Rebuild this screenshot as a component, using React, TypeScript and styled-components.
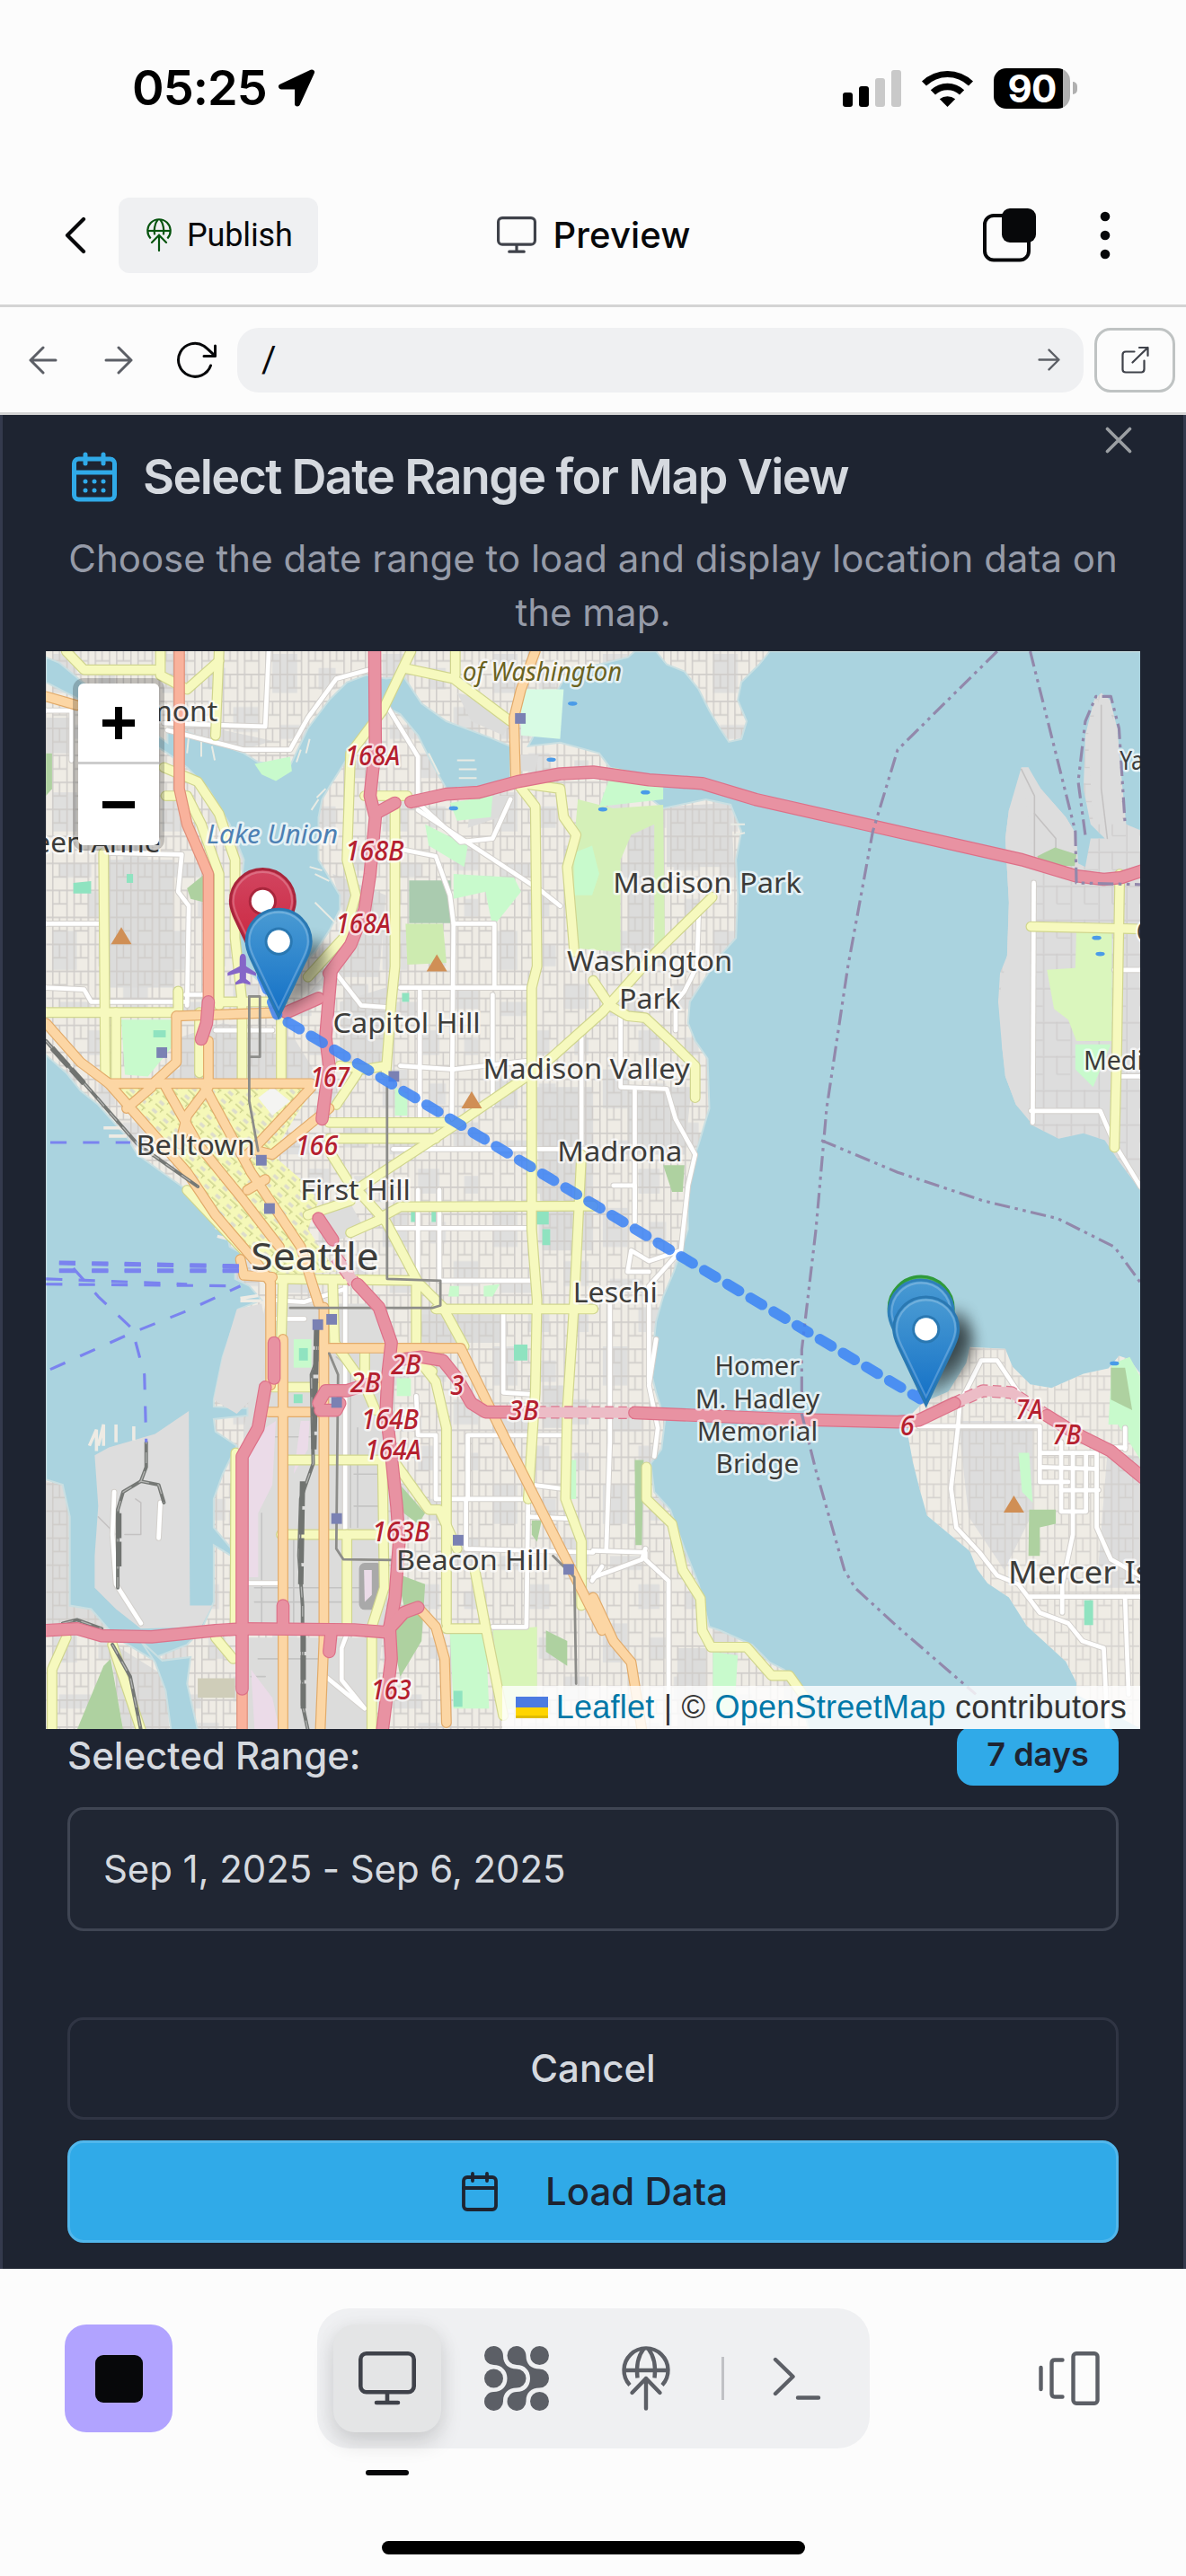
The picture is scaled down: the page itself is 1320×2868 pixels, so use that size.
import React from "react";
import styled, { createGlobalStyle } from "styled-components";

const GlobalStyle = createGlobalStyle`
  * { box-sizing: border-box; }
  html, body { margin: 0; padding: 0; background: #fcfcfc; }
  body { font-family: Inter, "Liberation Sans", sans-serif; }
  button { font: inherit; padding: 0; margin: 0; border: 0; background: none; color: inherit; }
`;

const INK = "#07080a";
const MUTED = "#5c5f66";

/* ------------------------------ shell ------------------------------ */

const Screen = styled.div`
  width: 1320px;
  height: 2868px;
  display: flex;
  flex-direction: column;
  background: #fcfcfc;
  overflow: hidden;
`;

const StatusBar = styled.header`
  height: 184px;
  flex: none;
  display: flex;
  justify-content: space-between;
  align-items: flex-start;
  padding: 75px 121px 0 147px;
`;

const Clock = styled.div`
  display: flex;
  align-items: center;
  gap: 12px;
  height: 46px;
  font-size: 54px;
  font-weight: 600;
  line-height: 46px;
  letter-spacing: -0.9px;
  color: #000;
`;

const StatusIcons = styled.div`
  display: flex;
  align-items: center;
  height: 46px;
`;

const Signal = styled.div`
  display: flex;
  align-items: flex-end;
  gap: 7px;
  height: 41px;
  margin-right: 23px;
`;

const SignalBar = styled.i<{ $h: number; $on: boolean }>`
  width: 11px;
  height: ${(p) => p.$h}px;
  border-radius: 3px;
  background: ${(p) => (p.$on ? "#000" : "#c9c9c9")};
`;

const Battery = styled.div`
  width: 85px;
  height: 45px;
  margin: 0 3px 0 23px;
  border-radius: 14px;
  background: linear-gradient(90deg, #000 77px, #b0b0b0 77px);
  color: #fff;
  font-size: 42px;
  font-weight: 700;
  line-height: 45px;
  text-align: center;
  letter-spacing: -0.8px;
`;

const BatteryTip = styled.i`
  width: 5px;
  height: 14px;
  border-radius: 0 5px 5px 0;
  background: #b0b0b0;
`;

const NavBar = styled.nav`
  height: 158px;
  flex: none;
  display: grid;
  grid-template-columns: 1fr auto 1fr;
  align-items: center;
  padding: 0 84px 0 72px;
  border-bottom: 3px solid #d4d4d4;
`;

const NavSide = styled.div<{ $end?: boolean }>`
  display: flex;
  align-items: center;
  justify-content: ${(p) => (p.$end ? "flex-end" : "flex-start")};
  gap: ${(p) => (p.$end ? "70px" : "36px")};
`;

const PublishButton = styled.button`
  width: 222px;
  height: 84px;
  display: flex;
  align-items: center;
  gap: 17px;
  padding-left: 31px;
  border-radius: 12px;
  background: #eff0f2;
  font-family: Roboto, Inter, sans-serif;
  font-size: 36px;
  line-height: 44px;
  letter-spacing: -0.15px;
  color: ${INK};
`;

const NavTitle = styled.h1`
  display: flex;
  align-items: center;
  gap: 18px;
  margin: 0 0 0 14px;
  font-size: 40px;
  line-height: 48px;
  font-weight: 500;
  letter-spacing: 0.15px;
  color: ${INK};
`;

const AddressBar = styled.div`
  height: 120px;
  flex: none;
  display: flex;
  align-items: center;
  padding: 0 12px 0 32px;
  border-bottom: 3px solid #d4d4d4;
`;

const HistoryIcons = styled.div`
  display: flex;
  align-items: center;
  width: 232px;
  gap: 52px;
  flex: none;
  > :last-child { margin-left: -4px; }
`;

const UrlField = styled.div`
  flex: 1;
  height: 72px;
  display: flex;
  align-items: center;
  justify-content: space-between;
  padding: 0 26px 0 27px;
  border-radius: 24px;
  background: #eff0f2;
  font-family: Roboto, sans-serif;
  font-size: 40px;
  line-height: 48px;
  color: ${INK};
`;

const OpenButton = styled.button`
  width: 90px;
  height: 72px;
  flex: none;
  margin-left: 12px;
  display: grid;
  place-items: center;
  border: 3px solid #bfc3c3;
  border-radius: 18px;
`;

/* ------------------------------ dialog ------------------------------ */

const Dialog = styled.main`
  height: 2064px;
  flex: none;
  display: flex;
  flex-direction: column;
  background: #1e2431;
  border: solid #343a4d;
  border-width: 0 3px;
  color: #d5d9df;
`;

const CloseRow = styled.div`
  height: 43px;
  display: flex;
  justify-content: flex-end;
  align-items: flex-end;
  padding-right: 57px;
`;

const Heading = styled.h2`
  display: flex;
  align-items: center;
  gap: 24px;
  height: 60px;
  margin: -4px 0 0 72px;
  font-size: 54px;
  line-height: 54px;
  font-weight: 600;
  letter-spacing: -1.68px;
`;

const Description = styled.p`
  margin: 31px 60px 0;
  height: 133px;
  font-size: 42px;
  line-height: 60px;
  text-align: center;
  color: #969ba8;
`;

const MapFrame = styled.section`
  position: relative;
  z-index: 1;
  width: 1218px;
  height: 1200px;
  margin-left: 48px;
  flex: none;
  overflow: hidden;
  background: #aad3df;
  > svg { display: block; }
`;

const ZoomControl = styled.div`
  position: absolute;
  left: 30px;
  top: 30px;
  width: 102px;
  display: flex;
  flex-direction: column;
  border: 6px solid rgba(0, 0, 0, 0.2);
  border-radius: 12px;
  background-clip: padding-box;
`;

const ZoomButton = styled.button<{ $first?: boolean }>`
  height: 90px;
  display: grid;
  place-items: center;
  background: #fff;
  border-bottom: ${(p) => (p.$first ? "3px solid #ccc" : "0")};
  border-radius: ${(p) => (p.$first ? "6px 6px 0 0" : "0 0 6px 6px")};
`;

const Attribution = styled.div`
  position: absolute;
  right: 0;
  bottom: 0;
  height: 48px;
  display: flex;
  align-items: center;
  padding: 0 15px;
  background: rgba(255, 255, 255, 0.8);
  font-family: "Liberation Sans", Arial, sans-serif;
  font-size: 36px;
  line-height: 48px;
  letter-spacing: 0.24px;
  white-space: pre;
  color: #333;
`;

const MapLink = styled.span`
  color: #0078a8;
`;

const Flag = styled.i`
  width: 36px;
  height: 24px;
  margin-right: 9px;
  background: linear-gradient(#4c7be1 50%, #ffd500 50%, #ffd500 86%, #e0bc00 86%);
`;

const RangeRow = styled.div`
  display: flex;
  align-items: center;
  justify-content: space-between;
  height: 66px;
  margin: -3px 72px 0;
  font-size: 42px;
  line-height: 60px;
  font-weight: 500;
  flex: none;
`;

const DaysBadge = styled.span`
  width: 180px;
  height: 66px;
  border-radius: 18px;
  background: #30aae8;
  color: #1e2431;
  font-size: 36px;
  font-weight: 600;
  line-height: 62px;
  text-align: center;
`;

const RangeField = styled.div`
  height: 138px;
  flex: none;
  margin: 24px 72px 0;
  padding: 0 37px;
  border: 3px solid #3f4553;
  border-radius: 18px;
  background: #202633;
  font-size: 42px;
  line-height: 131px;
  letter-spacing: -0.1px;
`;

const Actions = styled.div`
  display: flex;
  flex-direction: column;
  gap: 23px;
  margin: 96px 72px 0;
`;

const ActionButton = styled.button<{ $primary?: boolean }>`
  height: 114px;
  display: flex;
  align-items: center;
  justify-content: center;
  gap: 49px;
  border: 3px solid ${(p) => (p.$primary ? "#51b7ec" : "#303544")};
  border-radius: 18px;
  background: ${(p) => (p.$primary ? "#30aae8" : "transparent")};
  color: ${(p) => (p.$primary ? "#1e2431" : "#d5d9df")};
  font-size: 42px;
  line-height: 60px;
  font-weight: 500;
`;

/* ------------------------------ bottom bar ------------------------------ */

const BottomBar = styled.footer`
  height: 342px;
  flex: none;
  display: grid;
  grid-template-columns: 281px 615px 1fr;
  align-items: start;
  padding: 44px 96px 0 72px;
`;

const StopButton = styled.button`
  width: 120px;
  height: 120px;
  margin-top: 18px;
  display: grid;
  place-items: center;
  border-radius: 24px;
  background: #b1a3ff;
`;

const StopGlyph = styled.i`
  width: 53px;
  height: 53px;
  border-radius: 9px;
  background: ${INK};
`;

const ToolGroup = styled.div`
  height: 156px;
  display: flex;
  align-items: center;
  padding-left: 18px;
  border-radius: 36px;
  background: #eff0f2;
`;

const Tool = styled.button<{ $active?: boolean; $w: number }>`
  width: ${(p) => p.$w}px;
  flex: none;
  height: 120px;
  display: grid;
  place-items: center;
  border-radius: 24px;
  background: ${(p) => (p.$active ? "#e4e5e6" : "transparent")};
  box-shadow: ${(p) => (p.$active ? "0 12px 24px rgba(0,0,0,.14), 0 0 24px rgba(0,0,0,.04)" : "none")};
`;

const ToolDivider = styled.i`
  width: 3px;
  height: 48px;
  margin-left: 24px;
  flex: none;
  background: #c0c1c5;
`;

const Side = styled.div`
  height: 156px;
  display: flex;
  align-items: center;
  justify-content: flex-end;
`;

const ActiveMark = styled.i`
  display: block;
  width: 48px;
  height: 6px;
  border-radius: 3px;
  margin: 24px 0 0 54px;
  background: ${INK};
`;

const HomeIndicator = styled.i`
  display: block;
  width: 471px;
  height: 15px;
  border-radius: 8px;
  margin: 73px 0 0 72px;
  background: #000;
`;

/* ------------------------------ icons ------------------------------ */

const PublishIcon = ({ w, color, sw }: { w: number; color: string; sw: number }) => (
  <svg width={w} height={(w * 72) / 54} viewBox="0 0 54 72" fill="none" stroke={color} strokeWidth={sw} strokeLinecap="round" strokeLinejoin="round">
    <path d="M9 43.500A24.500 24.500 0 1 1 45 43.500" strokeLinecap="butt" />
    <path d="M2.500 27H51.500" strokeLinecap="butt" />
    <path d="M17.500 35.500Q15 15 24.500 3M36.500 35.500Q39 15 29.500 3" strokeLinecap="butt" />
    <path d="M27 69.500V36M11.500 52L27 36 42.500 52" />
  </svg>
);

const MonitorIcon = ({ w, color, sw }: { w: number; color: string; sw: number }) => (
  <svg width={w} height={(w * 60) / 64} viewBox="0 0 64 60" fill="none" stroke={color} strokeWidth={sw} strokeLinecap="round">
    <rect x="2.300" y="2.300" width="59.400" height="43" rx="6.500" />
    <path d="M32 46V56M20 57H44" />
  </svg>
);

const Arrow = ({ w, color, sw, left }: { w: number; color: string; sw: number; left?: boolean }) => (
  <svg width={w} height={w} viewBox="0 0 32 32" fill="none" stroke={color} strokeWidth={sw} strokeLinecap="round" strokeLinejoin="round">
    <path d={left ? "M30 16H2M16 2L2 16 16 30" : "M2 16H30M16 2L30 16 16 30"} />
  </svg>
);

const DotsGridIcon = () => (
  <svg width="72" height="72" viewBox="0 0 72 72" fill={MUTED}>
    <circle cx="61.500" cy="10.500" r="10.500" />
    <circle cx="10.500" cy="36" r="10.500" />
    <circle cx="61.500" cy="61.500" r="10.500" />
    <path d="M10.500 0C17 0 21 5 21 11 21 20 27 25.500 36 25.500A10.500 10.500 0 0 1 36 46.500C27 46.500 21 52 21 61A10.500 10.500 0 1 1 10.500 51C19 51 25.500 45 25.500 36S19 21 10.500 21A10.500 10.500 0 1 1 10.500 0Z" />
    <path d="M36 0C42 0 46.500 5 46.500 11 46.500 20 52 25.500 61.500 25.500A10.500 10.500 0 0 1 61.500 46.500C52 46.500 46.500 52 46.500 61A10.500 10.500 0 1 1 36 51C45 51 51 45 51 36S45 21 36 21A10.500 10.500 0 1 1 36 0Z" />
  </svg>
);

const CalendarIcon = ({ size, color, days }: { size: number; color: string; days?: boolean }) => (
  <svg width={size} height={size} viewBox="0 0 24 24" fill="none" stroke={color} strokeWidth={days ? 2 : 1.9} strokeLinecap="round" strokeLinejoin="round">
    <rect x="3" y="4" width="18" height="18" rx="2" />
    <path d="M8 2v4M16 2v4M3 10h18" />
    {days && <path d="M8 14h.01M12 14h.01M16 14h.01M8 18h.01M12 18h.01M16 18h.01" />}
  </svg>
);

/* ------------------------------ map data ------------------------------ */

const WATER = [
  "3,30 40,45 100,95 200,170 345,270 345,240 400,240 480,270 560,300 600,325 690,335 740,230 800,150 850,100 905,80 960,90 1010,85 1060,160 1130,210 1250,255 1310,280 1310,375 1200,405 1130,400 1090,330 1050,250 1000,190 960,170 900,250 860,300 800,395 780,430 770,480 770,600 800,650 830,700 830,740 800,800 760,860 720,900 620,960 560,900 545,850 550,700 560,600 520,500 460,400 400,340 345,300 200,210 100,150 3,100",
  "1450,110 1480,60 1560,50 1640,30 1660,13 1720,13 1750,50 1800,70 1840,120 1870,180 1900,230 1925,268 1960,260 1975,210 1950,150 1960,100 2010,50 2040,13 3090,13 3090,3050 2150,3050 2120,2925 2080,2880 2040,2860 1990,2810 1900,2770 1870,2760 1840,2640 1800,2540 1760,2430 1715,2380 1705,2300 1735,2260 1745,2180 1720,2100 1705,2040 1720,1900 1740,1830 1770,1760 1810,1640 1808,1520 1820,1460 1840,1400 1870,1300 1865,1160 1830,1110 1810,1060 1815,1000 1860,930 1900,870 1945,820 1950,700 1945,600 1960,520 1930,445 1860,430 1740,455 1680,410 1640,360 1590,340 1560,300 1450,270 1360,280",
  "3,1150 60,1200 100,1250 150,1290 230,1380 260,1430 330,1480 400,1530 440,1570 500,1590 520,1690 575,1720 535,1740 535,1780 575,1800 610,1840 545,1865 500,2000 475,2120 475,2140 570,2145 570,2165 475,2175 480,2210 540,2250 500,2330 475,2400 475,2480 525,2540 525,2560 475,2530 475,2690 440,2770 400,2810 300,2850 200,2790 130,2710 70,2700 70,2450 50,2360 3,2345",
  "270,2800 330,2855 410,2845 400,2920 430,3050 355,3050 340,2940 310,2860",
];

const LAND_GRAY = [
  "140,2277 180,2255 310,2217 405,2152 408,2700 470,2700 440,2760 270,2765 200,2710 140,2650 140,2560 150,2420",
  "540,1865 610,1850 630,1960 600,2100 540,2160 475,2120 500,2000",
  "2748,340 2768,340 2803,400 2873,480 2903,530 2908,610 2928,620 2943,540 2983,540 2943,500 2923,400 2928,250 2953,150 2973,130 2998,150 3018,230 3033,400 3043,500 3090,520 3090,1540 3023,1450 2983,1390 2923,1370 2853,1385 2783,1350 2733,1290 2703,1210 2693,1120 2698,1050 2683,1000 2688,920 2708,870 2713,720 2703,540 2713,460 2743,400",
];

const MERCER =
  "2603,1972 2703,1977 2723,2027 2773,2077 2833,2087 2923,2047 2993,2032 3023,1997 3053,2007 3090,2057 3090,3050 2903,2950 2903,2917 2873,2857 2763,2757 2713,2677 2653,2637 2623,2597 2603,2547 2543,2497 2483,2447 2463,2377 2443,2297 2428,2217 2443,2157 2473,2127 2543,2097 2593,2017";

const GRAY_CITY = [
  "345,200 640,265 560,290 345,245",
  "3,200 80,200 80,300 3,300",
  "810,640 960,700 940,930 830,930 720,1000 860,840",
  "380,1100 500,1060 700,1100 780,1230 380,1230",
  "830,1000 960,960 960,1200 830,1180",
  "1380,1240 1543,1240 1543,1700 1400,1700",
  "1640,500 1720,500 1710,860 1640,860",
  "1750,450 1930,440 1940,620 1750,620",
  "3,2350 50,2360 70,2450 70,2700 130,2710 180,2770 3,2770",
  "180,2800 340,2900 350,3050 220,3050",
  "180,600 360,600 360,960 180,960",
  "1060,1880 1290,1880 1290,1960 1060,1960",
  "1400,2080 1460,2080 1460,2200 1400,2200",
  "1780,2820 1860,2820 1860,3050 1780,3050",
  "1640,1240 1820,1240 1800,1430 1640,1430",
];

const GRAY_PLAIN = [
  "620,1850 950,1850 960,2760 560,2780 560,2200",
  "560,2790 950,2790 920,3050 560,3050",
  "1200,420 1320,420 1280,480 1190,510",
  "1160,130 1250,150 1310,210 1290,250 1200,210",
  "1230,305 1390,305 1380,350 1230,350",
];

const GRAY_MERCER = [
  "2570,2180 2780,2180 2780,2440 2700,2600 2600,2450",
  "2990,2270 3090,2280 3090,2650 2960,2650",
];

const GREENS: [string, string][] = [
  ["590,330 690,310 695,350 650,378 610,360", "#c8facc"],
  ["1025,658 1142,658 1142,778 1025,778", "#aacbaf"],
  ["1015,780 1120,780 1130,890 1020,895", "#cdebb0"],
  ["215,1050 360,1050 355,1130 290,1210 225,1205", "#c8facc"],
  ["1500,430 1600,455 1740,445 1745,850 1715,860 1715,500 1650,530 1620,600 1620,860 1500,850 1480,650", "#d4f0b8"],
  ["1490,580 1540,560 1560,640 1540,700 1490,700", "#c8facc"],
  ["1070,500 1190,560 1180,620 1080,560", "#c8facc"],
  ["1150,640 1320,650 1340,690 1260,790 1240,690 1150,710", "#c8facc"],
  ["1340,120 1460,120 1450,260 1340,250", "#d8fbe4"],
  ["1140,440 1260,420 1255,480 1160,490", "#c8facc"],
  ["1600,340 1740,370 1740,430 1560,450", "#c8facc"],
  ["2903,800 3003,800 3003,1110 2903,1110 2880,1050 2840,1020 2820,910 2900,905", "#daf6bd"],
  ["2793,590 2843,565 2903,585 2898,618 2800,615", "#aed1a0"],
  ["2900,1120 3000,1120 2950,1240 2900,1190", "#c8facc"],
  ["1740,1460 1800,1460 1795,1535 1765,1535", "#aed1a0"],
  ["3003,2020 3053,2000 3090,2070 3090,2300 3020,2190 2993,2190", "#c8facc"],
  ["3000,2030 3040,2030 3060,2150 3000,2120", "#aed1a0"],
  ["2770,2430 2845,2430 2845,2470 2800,2480 2800,2560 2768,2560", "#aed1a0"],
  ["2740,2270 2770,2270 2780,2410 2750,2380", "#c8facc"],
  ["990,2610 1070,2640 1060,2800 1000,2900 980,2800 1010,2700", "#aed1a0"],
  ["1140,2780 1240,2770 1250,2990 1150,2990", "#c8facc"],
  ["1260,2770 1385,2760 1385,3000 1290,2990", "#d8f5b8"],
  ["1880,2830 1950,2840 1940,3000 1880,3000", "#c8facc"],
  ["165,2870 185,2850 220,3050 90,3050", "#aed1a0"],
  ["700,1950 750,1950 750,2030 700,2030", "#c8facc"],
  ["990,2060 1030,2060 1030,2110 990,2110", "#c8facc"],
  ["1660,2290 1685,2290 1680,2530 1662,2530", "#aed1a0"],
  ["1000,2360 1070,2440 1050,2470 1010,2440", "#aed1a0"],
  ["1320,1965 1358,1965 1358,2010 1320,2010", "#8fe3c0"],
  ["1380,1590 1418,1590 1418,1627 1380,1627", "#8fe3c0"],
  ["80,665 130,660 130,695 80,695", "#8fe3c0"],
  ["230,640 248,640 248,665 230,665", "#8fe3c0"],
  ["305,1080 340,1080 340,1100 305,1100", "#8fe3c0"],
  ["2925,2685 2950,2685 2950,2755 2925,2755", "#8fe3c0"],
  ["430,2905 535,2905 535,2960 430,2960", "#cfcdb9"],
  ["400,680 450,640 450,720 410,710", "#aed1a0"],
  ["3,300 20,300 20,400 3,420", "#aed1a0"],
  ["985,1240 1020,1260 1020,1320 985,1320", "#c8facc"],
  ["1140,1800 1165,1800 1165,1830 1135,1830", "#c8facc"],
  ["1235,1800 1280,1795 1260,1830 1235,1830", "#c8facc"],
  ["715,1975 740,1975 740,2010 715,2010", "#8fe3c0"],
  ["700,2105 725,2105 725,2130 700,2130", "#8fe3c0"],
  ["1005,975 1025,975 1025,1000 1005,1000", "#8fe3c0"],
  ["1398,2460 1385,2520 1370,2500 1370,2460", "#aed1a0"],
  ["1410,2770 1470,2800 1470,2870 1410,2830", "#aed1a0"],
  ["1150,2940 1175,2940 1175,2985 1150,2985", "#8fe3c0"],
  ["1480,2290 1495,2290 1495,2400 1480,2400", "#c8facc"],
  ["1030,1590 1042,1590 1042,1620 1030,1620", "#8fe3c0"],
  ["1088,1590 1100,1590 1100,1620 1088,1620", "#8fe3c0"],
  ["1400,1640 1422,1640 1422,1685 1400,1685", "#8fe3c0"],
];

const INDUSTRIAL = [
  "620,2200 650,2180 640,2360 600,2440 600,2620 575,2620 575,2260",
  "720,2180 745,2180 740,2260 700,2330",
  "580,2880 640,2960 660,3050 590,3050",
];

const MINOR = [
  "3,180 75,180 75,320", "335,215 620,225 630,13", "345,235 560,290 690,290 740,200 820,90 930,60",
  "965,170 1050,310 1050,440 1170,550 1260,540 1310,430", "1050,460 1400,690 1450,730", "1000,570 1100,590 1140,700 1150,780 1265,780 1265,960",
  "1000,960 1370,960", "1150,780 1145,1340", "820,920 890,1010 960,1015", "3,780 155,780", "3,960 110,965 130,1000 400,1000",
  "160,580 385,585 375,690 405,730 400,1010", "395,980 450,980", "480,1080 640,1080", "1000,1180 1150,1190 1370,1165", "1055,970 1055,1340",
  "980,1415 1543,1415", "1260,980 1260,1290", "1110,1530 1110,1780", "1050,1530 1050,1780", "980,1637 1370,1637", "1110,1785 1380,1785",
  "1290,1870 1290,2100 1370,2105", "1045,2110 1050,2220 1100,2220 1100,2400 1360,2400 1355,2760 1260,2760", "1185,2400 1185,2540 1543,2550",
  "1190,2400 1190,2220 1460,2220", "1840,750 1835,900 1800,970 1775,1000 1775,1080", "1620,1040 1620,1240 1750,1245 1775,1330 1830,1430 1810,1517 1790,1700 1700,1730 1650,1700 1640,1760 1700,1760",
  "1660,1250 1660,1620", "1590,1850 1590,2240 1580,2540", "1720,1950 1700,2080 1725,2200 1715,2280", "1780,1710 1700,1800 1700,2070",
  "1543,2545 1690,2550 1690,2570 1755,2630 1755,3000", "1543,2620 1600,2600 1680,2570 1690,2540", "845,1800 845,2490", "850,2780 835,2820 835,2910 900,2990 790,2900",
  "570,2637 660,2637", "650,1840 730,1845 840,1810", "650,1893 730,1893", "2783,665 2780,1340", "2775,1307 2970,1307 3010,1400 3083,1520",
  "3010,910 3083,910", "3010,1210 3083,1210", "1510,1100 1510,1400", "1600,1517 1660,1517 1660,1580", "2460,2195 2800,2195 2800,2352 2880,2352",
  "2570,2195 2575,2130 2635,2010 2680,2010 2740,2100", "2570,2195 2550,2370 2565,2480 2630,2550 2680,2615 2740,2640 2800,2720 2880,2750 2920,2800 2980,2820 2990,3040",
  "2800,2270 2960,2270 2960,2480 3000,2570 3090,2620", "2860,2240 2860,2435 2930,2435 2930,2270", "2800,2310 2960,2315", "2860,2375 2965,2375", "2893,2270 2893,2500 2863,2640 2863,2720",
  "2770,2675 3090,2675", "3040,2200 3040,2260", "3040,2680 3050,2950", "2970,2255 3040,2255", "195,2380 190,2500 200,2640 270,2750", "325,2410 320,2510",
  "1360,2450 1470,2455", "1370,2360 1450,2370", "1568,2590 1540,2630",
];

const SECONDARY = [
  "60,13 110,65 310,65", "325,13 325,80 400,120 490,40", "490,13 480,250", "1030,13 950,180 860,300 850,600 875,700 840,820 740,930",
  "1010,60 1150,90 1310,210", "1155,13 1155,80", "985,430 985,900 975,1000 960,1200", "900,420 1020,420", "335,340 430,380 490,470 535,600 535,820 555,1000 555,1225",
  "340,420 400,420 440,500 490,640 490,1010", "1330,385 1380,450 1385,900 1370,960 1370,1640 1385,1840 1380,2100 1360,2400", "1340,385 1450,400 1460,480 1495,530 1470,620 1490,860",
  "165,580 170,1220", "200,1030 200,1220", "3,1030 375,1030", "375,970 375,1030", "490,1000 650,1000", "435,1030 435,1200", "665,1050 665,1230",
  "1878,705 1720,860 1568,1030 1400,1180 1180,1330 950,1480 860,1540", "1543,940 1590,1010 1640,1040 1690,1045 1760,1110 1830,1180 1830,1270",
  "800,1340 1130,1340", "800,1385 1100,1385", "830,1180 900,1190 960,1180", "880,1200 820,1290", "1510,1430 1490,1840 1470,2150 1465,2400 1510,2520 1510,2700",
  "800,1420 850,1500", "940,1610 1000,1577 1543,1575", "870,1520 960,1620 1050,1790 1120,1860 1180,1970", "740,1600 860,1560", "860,1650 950,1610",
  "1045,1800 1045,2000 1100,2070 1130,2200 1130,2750", "650,1780 1040,1785", "1100,1865 1543,1865", "680,2290 980,2290 1080,2430 1110,2430 1160,2540",
  "665,2500 930,2500", "850,2500 850,2750", "950,2300 955,2650 920,2760 920,3050", "640,2085 790,2085", "670,1790 665,1960", "810,1790 815,1960 900,2080 930,2150",
  "900,1990 900,2080", "537,2270 535,2750", "1210,2600 1240,2760 1290,3010", "1130,2765 1240,2765", "1030,2000 1090,2040", "2775,788 3083,795", "3025,640 3017,1130 3010,1410",
  "1693,2310 1693,2400 1765,2470 1795,2600 1845,2680 1850,2770 1875,2817 1975,2817 2045,2897 2095,2897 2140,2960", "60,2790 20,2880 20,3050", "480,2790 530,2850", "190,2810 270,3050",
  "400,1530 560,1700",
];

const PRIMARY = [
  "1380,13 1340,120 1320,200 1325,380", "3,140 90,165", "3,1060 100,1170 180,1230 750,1230", "370,1040 660,1030", "370,1040 370,1170 310,1225", "460,1110 460,1225",
  "180,1230 400,1480 480,1600 600,1740 635,1790 635,2080", "340,1240 430,1400 560,1560 660,1690", "450,1240 580,1480 720,1690 770,1850", "750,1240 600,1400 560,1440", "800,1300 640,1430 600,1420",
  "460,1240 400,1320 380,1400", "300,1240 230,1300", "620,1500 570,1530",
  "670,1950 670,3050", "785,1860 785,2800 775,3050", "800,1975 1170,1975 1300,2240 1568,2770", "1543,2677 1600,2800 1650,2860 1680,3050", "1050,2705 1100,2760 1125,2850 1130,3030",
  "630,2155 790,2155", "550,1725 560,1770 640,1775",
];

const TRUNK = ["378,13 378,400 400,500 460,640 460,1010", "555,2930 555,3050"];

const MOTORWAY = [
  "928,13 930,280 915,420 930,480 915,640 900,740 860,840 800,920", "805,920 790,1100 800,1180 785,1290 780,1330", "770,1610 810,1670", "880,1795 940,1860 975,1960 965,2050 960,2150 975,2280 990,2420 997,2520 985,2680 970,2760 975,2850 950,3050",
  "930,470 985,440", "1030,437 1130,415 1220,410 1330,380 1450,358 1543,353 1700,375 1850,385 2000,430 2330,505 2750,600 2900,645 2980,655 3030,650 3090,630",
  "980,2010 1060,2000 1120,2010 1160,2060 1200,2130 1240,2155 1310,2155", "1660,2157 2080,2175 2400,2183 2460,2178 2560,2130", "2820,2165 2900,2215 3000,2265 3090,2340",
  "460,1000 455,1060 440,1105", "645,1960 645,2060", "620,2085 600,2200 555,2280 555,2935", "3,2770 90,2765 160,2785 300,2788 480,2770 560,2765 870,2768 960,2775 1010,2720 1050,2705",
  "770,2130 790,2095 850,2095 930,2070", "775,2150 820,2150 830,2130", "670,2700 670,2760", "805,2780 800,2830", "680,1030 770,990",
];

const TUNNEL = ["1310,2155 1660,2157", "2560,2130 2640,2095 2720,2100 2820,2165", "820,1720 870,1790"];

const RAIL = [
  "3,1110 120,1240 260,1400 430,1520", "765,1900 765,2010 750,2050 755,2300 720,2400 715,2560 725,2700 725,2980 740,3050",
  "205,2650 205,2430 220,2380 270,2350 320,2360 335,2410", "270,2350 285,2310 285,2240", "190,2810 240,2900 270,3050", "50,2750 90,2740 160,2765",
];

const LIGHT_RAIL = [
  "575,985 605,985 605,1155 575,1155 575,1280 600,1420", "575,985 575,1155", "963,1240 963,1780 1113,1785 1113,1855 1090,1862 690,1862", "800,1990 825,2050 820,2540 840,2570 980,2572", "1430,2560 1490,2620 1495,2920",
];

const FERRIES = [
  "15,1396 240,1396", "40,1735 560,1745", "40,1757 560,1757", "3,1795 540,1800", "3,1780 400,1795", "15,2035 250,1930 400,1870 550,1800", "80,1750 150,1830 245,1920 280,2050 285,2240",
];

const BOUNDARIES = [
  "2680,13 2400,290 2330,520 2260,900 2200,1300 2170,1640 2130,1980 2130,2160 2170,2320 2250,2600 2280,2650 2400,2760 2620,2950",
  "2185,1390 2400,1480 2640,1560 2850,1610 3010,1690 3090,1800", "2773,13 2810,160 2900,520 2903,665 3090,670",
  "2928,530 2908,380 2928,210 2958,140 3000,140 3023,230 3040,500",
];

type Label = { t: string; x: number; y: number; w: number; s?: number; c?: string; i?: boolean; b?: boolean };
const EXIT = "#b5202f";
const LABELS: Label[] = [
  { t: "of Washington", x: 1400, y: 95, w: 448, s: 74, c: "#6a6220", i: true },
  { t: "Fremont", x: 325, y: 210, w: 322 },
  { t: "Queen Anne", x: 92, y: 578, w: 466 },
  { t: "Lake Union", x: 640, y: 555, w: 370, s: 72, c: "#4d80b3", i: true },
  { t: "Capitol Hill", x: 1018, y: 1087, w: 415 },
  { t: "Belltown", x: 424, y: 1432, w: 335 },
  { t: "First Hill", x: 874, y: 1558, w: 310 },
  { t: "Seattle", x: 760, y: 1754, w: 360, s: 106 },
  { t: "Madison Park", x: 1864, y: 692, w: 530 },
  { t: "Washington", x: 1702, y: 912, w: 466 },
  { t: "Park", x: 1702, y: 1018, w: 172 },
  { t: "Madison Valley", x: 1524, y: 1216, w: 582 },
  { t: "Madrona", x: 1618, y: 1448, w: 352 },
  { t: "Leschi", x: 1605, y: 1846, w: 238 },
  { t: "Beacon Hill", x: 1204, y: 2600, w: 430 },
  { t: "Homer", x: 2005, y: 2052, w: 240, s: 72 },
  { t: "M. Hadley", x: 2005, y: 2144, w: 350, s: 72 },
  { t: "Memorial", x: 2005, y: 2236, w: 340, s: 72 },
  { t: "Bridge", x: 2005, y: 2328, w: 234, s: 72 },
  { t: "Mercer Island", x: 3006, y: 2638, w: 590, s: 86 },
  { t: "Medina", x: 3050, y: 1192, w: 254, s: 74 },
  { t: "Yarrow Point", x: 3210, y: 347, w: 370, s: 74 },
  { t: "Clyde Hill", x: 3222, y: 830, w: 300 },
  { t: "168A", x: 922, y: 335, w: 155, s: 77, c: EXIT, i: true, b: true },
  { t: "168B", x: 928, y: 602, w: 165, s: 77, c: EXIT, i: true, b: true },
  { t: "168A", x: 896, y: 808, w: 155, s: 77, c: EXIT, i: true, b: true },
  { t: "167", x: 802, y: 1240, w: 110, s: 77, c: EXIT, i: true, b: true },
  { t: "166", x: 765, y: 1431, w: 120, s: 77, c: EXIT, i: true, b: true },
  { t: "2B", x: 1016, y: 2048, w: 84, s: 77, c: EXIT, i: true, b: true },
  { t: "2B", x: 902, y: 2100, w: 84, s: 77, c: EXIT, i: true, b: true },
  { t: "3", x: 1160, y: 2108, w: 38, s: 77, c: EXIT, i: true, b: true },
  { t: "3B", x: 1347, y: 2177, w: 84, s: 77, c: EXIT, i: true, b: true },
  { t: "164B", x: 971, y: 2203, w: 162, s: 77, c: EXIT, i: true, b: true },
  { t: "164A", x: 980, y: 2289, w: 158, s: 77, c: EXIT, i: true, b: true },
  { t: "163B", x: 1002, y: 2520, w: 162, s: 77, c: EXIT, i: true, b: true },
  { t: "163", x: 974, y: 2964, w: 114, s: 77, c: EXIT, i: true, b: true },
  { t: "6", x: 2427, y: 2220, w: 40, s: 77, c: EXIT, i: true, b: true },
  { t: "7A", x: 2770, y: 2176, w: 76, s: 77, c: EXIT, i: true, b: true },
  { t: "7B", x: 2876, y: 2246, w: 80, s: 77, c: EXIT, i: true, b: true },
];

const PEAKS = [[215, 838], [1103, 914], [1201, 1300], [2727, 2438]];
const STATIONS = [[1338, 202], [329, 1143], [982, 1210], [609, 1446], [632, 1582], [768, 1909], [807, 1894], [821, 2128], [821, 2455], [1163, 2516], [1474, 2598]];
const PONDS = [[1485, 160], [1150, 455], [1425, 318], [1690, 410], [1570, 458], [2960, 820], [2970, 865], [3010, 2018]];

const Lines = ({ d, stroke, width, dash, cap = "round" }: { d: string[]; stroke: string; width: number; dash?: string; cap?: "round" | "butt" }) => (
  <g fill="none" stroke={stroke} strokeWidth={width} strokeDasharray={dash} strokeLinecap={cap} strokeLinejoin="round">
    {d.map((points, i) => <polyline key={i} points={points} />)}
  </g>
);

const Road = ({ d, fill, casing, width }: { d: string[]; fill: string; casing: string; width: number }) => (
  <>
    <Lines d={d} stroke={casing} width={width} />
    <Lines d={d} stroke={fill} width={width - 6} />
  </>
);

const Areas = ({ d, fill }: { d: string[]; fill: string }) => (
  <g fill={fill}>{d.map((p, i) => <polygon key={i} points={p} />)}</g>
);

const PIN = "M12.500 .5C5.900 .5 .5 5.900 .5 12.500C.5 15 1.400 17 2.300 19L12.500 40.500 22.700 19C23.600 17 24.500 15 24.500 12.500 24.500 5.900 19.100 .5 12.500 .5Z";

const Pin = ({ x, y, tone, edge }: { x: number; y: number; tone: string; edge: string }) => (
  <g transform={`translate(${x} ${y}) scale(7.587)`}>
    <path d={PIN} fill={`url(#${tone})`} stroke={edge} strokeWidth="1" />
    <path d={PIN} fill="none" stroke="#fff" strokeOpacity=".22" strokeWidth=".8" transform="translate(1.150 1.200) scale(.908 .9)" />
    <circle cx="12.500" cy="12.500" r="4.700" fill="none" stroke={edge} strokeWidth="1" />
    <circle cx="12.500" cy="12.500" r="4.200" fill="#fff" />
  </g>
);

const PinShadow = ({ x, y }: { x: number; y: number }) => (
  <path transform={`translate(${x} ${y})`} d="M0 0L40 -170Q90 -240 130 -190Q150 -130 90 -60Z" fill="#000" opacity=".42" filter="url(#soft)" />
);

const tones: [string, string, string][] = [
  ["blue", "#4a9bd3", "#126fc6"],
  ["red", "#d24560", "#c81c35"],
  ["green", "#3cae45", "#1f8f2d"],
];

const SeattleMap = () => (
  <svg width="1218" height="1200" viewBox="2.500 12.600 3080 3035" preserveAspectRatio="none">
    <defs>
      <pattern id="tint" width="310" height="390" patternUnits="userSpaceOnUse">
        <path d="M20 20h70v110h-70zM150 60h48v60h-48zM220 170h70v70h-70zM40 220h90v40h-90zM120 300h60v70h-60zM250 320h40v50h-40z" fill="#dfdfde" />
      </pattern>
      <pattern id="blocks" width="60" height="76" patternUnits="userSpaceOnUse">
        <path d="M0 2H60M2 0V76M22 0V76M41 0V40M22 40H60" stroke="#d0cdca" strokeWidth="4" fill="none" />
      </pattern>
      <pattern id="lots" width="78" height="96" patternUnits="userSpaceOnUse">
        <path d="M0 3H78M40 0V52M3 3V96M40 52H78" stroke="#cfcdcd" strokeWidth="3.500" fill="none" />
      </pattern>
      <pattern id="core" width="42" height="30" patternUnits="userSpaceOnUse" patternTransform="rotate(42)">
        <rect width="42" height="30" fill="#f5f8b8" />
        <path d="M4 15H20" stroke="#dcdccb" strokeWidth="9" />
        <path d="M26 0V8M0 28H30" stroke="#c6cc86" strokeWidth="3" />
      </pattern>
      <filter id="soft" x="-60%" y="-60%" width="220%" height="220%"><feGaussianBlur stdDeviation="20" /></filter>
      {tones.map(([id, a, b]) => (
        <linearGradient key={id} id={id} x1="0" y1="0" x2="0" y2="1"><stop offset="0" stopColor={a} /><stop offset="1" stopColor={b} /></linearGradient>
      ))}
    </defs>

    <rect x="0" y="0" width="3090" height="3060" fill="#efece5" />
    <rect x="0" y="0" width="3090" height="3060" fill="url(#tint)" />
    <Areas d={GRAY_CITY} fill="#dcdcdb" />
    <rect x="0" y="0" width="3090" height="3060" fill="url(#blocks)" />
    <Areas d={GRAY_PLAIN} fill="#dcdcdb" />
    <Lines d={["590,2650 900,2650", "590,2690 900,2690", "610,2440 610,2780", "700,2500 700,2780", "870,2330 940,2330", "870,2420 940,2420", "640,2225 750,2225", "880,2200 880,2480", "580,2900 620,2900", "600,2850 770,2850", "820,2000 860,2030 860,2480"]} stroke="#c4c4c3" width={4} />
    {WATER.map((p, i) => <polygon key={i} points={p} fill="#aad3df" stroke="#c9dfe2" strokeWidth="5" />)}
    {LAND_GRAY.map((p, i) => <g key={i}><polygon points={p} fill="#dddddd" />{i === 2 && <polygon points={p} fill="url(#lots)" />}</g>)}
    <polygon points="2748,340 2768,340 2790,400 2780,1340 2733,1290 2703,1210 2693,1120 2683,1000 2708,870 2713,720 2703,540 2713,460" fill="#dddddd" />
    <polygon points="2748,345 2768,345 2803,400 2873,480 2903,530 2903,585 2843,565 2783,595" fill="#dddddd" />
    <polygon points="2935,250 2973,130 3018,230 3033,500 2950,500" fill="#dddddd" />
    <Lines d={["2748,345 2785,420 2785,590", "2785,470 2845,540 2845,580", "2973,165 2973,400 2990,540", "255,2400 270,2410 270,2500 225,2500", "150,2450 200,2500"]} stroke="#c4c2c2" width={4} />
    <polygon points={MERCER} fill="#efece5" />
    <Areas d={GRAY_MERCER} fill="#dddddd" />
    <polygon points={MERCER} fill="url(#blocks)" opacity=".8" />
    <Areas d={INDUSTRIAL} fill="#ebdbe8" />
    {GREENS.map(([p, c], i) => <polygon key={i} points={p} fill={c} />)}
    <polygon points="190,1240 760,1240 700,1330 640,1430 720,1500 770,1560 740,1640 820,1760 640,1770 540,1650 400,1470" fill="url(#core)" />
    <polygon points="600,1270 640,1240 690,1280 640,1320" fill="#f4f4f2" />
    <polygon points="770,1590 850,1550 900,1640 830,1670" fill="#dddddc" />
    <rect x="884" y="2580" width="66" height="132" rx="16" fill="#a9a9a9" />
    <path d="M898 2600h22v70l-20 20z" fill="#ebdbe8" />
    <path d="M125 2250l20-45v60M150 2250l15-60v60M200 2190v50M250 2195v40M480 1635l30 14M485 1660l40 10M165 1355h60M180 1378h50M550 1842h60M550 1835l50-8" stroke="#eeebe4" strokeWidth="9" fill="none" />
    <path d="M405 250l-5 50M440 265v45M470 280l8 40M720 290l-12 35M745 260l-10 40M770 430l-20 30M790 400l-25 25M760 640l40 20M760 720l60 60M745 620l35 10M1080 300l30 60M1160 320h50M1165 345h50M1165 370h50M1940 530l30-6M1930 500h40" stroke="#e9ebe4" strokeWidth="5" />

    <Lines d={MINOR} stroke="#d3d0cc" width={17} />
    <Lines d={MINOR} stroke="#ffffff" width={12} />
    <Road d={SECONDARY} fill="#f6f9be" casing="#d0d58e" width={30} />
    <Road d={PRIMARY} fill="#fcd6a4" casing="#e2ab6a" width={30} />
    <Road d={TRUNK} fill="#f9b29c" casing="#e08e78" width={32} />
    <Lines d={RAIL} stroke="#757875" width={10} />
    <Lines d={RAIL} stroke="#b5b6b4" width={3} dash="30 24" cap="butt" />
    <Lines d={["208,2440 208,2600", "725,2350 720,2640", "765,1900 757,2260", "727,2760 727,3000", "20,1130 110,1230"]} stroke="#707370" width={15} dash="70 10" cap="butt" />
    <Lines d={LIGHT_RAIL} stroke="#8c8c89" width={7} />
    <Lines d={TUNNEL} stroke="#dc7890" width={36} dash="24 14" cap="butt" />
    <Lines d={TUNNEL} stroke="#ecbcc6" width={30} cap="butt" />
    <Road d={MOTORWAY} fill="#e892a2" casing="#dd7088" width={37} />
    <Lines d={FERRIES} stroke="#7a83ef" width={8} dash="46 46" cap="butt" />
    <Lines d={FERRIES.slice(1, 3)} stroke="#7a83ef" width={13} dash="46 46" cap="butt" />
    <Lines d={BOUNDARIES} stroke="#9288ab" width={8} dash="44 14 9 14 9 14" cap="butt" />

    <path d="M557 865q9 0 9 15v20l28 18v9l-28-9v18l12 9v7l-21-5-21 5v-7l12-9v-18l-34 9v-9l34-18v-20q0-15 9-15z" fill="#8566c8" />
    {PEAKS.map(([x, y], i) => <path key={i} d={`M${x} ${y - 48}l29 48h-58z`} fill="#d08f55" />)}
    {STATIONS.map(([x, y], i) => <rect key={i} x={x - 15} y={y - 15} width="30" height="30" fill="#7a81b3" />)}
    {PONDS.map(([x, y], i) => <ellipse key={i} cx={x} cy={y} rx="13" ry="6" fill="#4a9be8" />)}

    <g fontFamily='"Noto Sans", "Open Sans", sans-serif' textAnchor="middle" paintOrder="stroke" strokeLinejoin="round">
      {LABELS.map((l, i) => (
        <text key={i} x={l.x} y={l.y} fontSize={l.s ?? 80} textLength={l.w} lengthAdjust="spacingAndGlyphs" fill={l.c ?? "#3c3c3a"}
          stroke="#fff" strokeOpacity=".7" strokeWidth="13" fontStyle={l.i ? "italic" : "normal"} fontWeight={l.b ? 500 : 400}>
          {l.t}
        </text>
      ))}
    </g>

    <PinShadow x={658} y={1038} />
    <PinShadow x={2480} y={2120} />
    <PinShadow x={2468} y={2080} />
    <polyline points="612,930 655,1040 2463,2118 2466,2075" fill="none" stroke="#3b82f6" strokeOpacity=".85" strokeWidth="30" strokeLinecap="round" strokeLinejoin="round" strokeDasharray="37.900 37.900" />
    <Pin x={518} y={622} tone="red" edge="#a8263c" />
    <Pin x={563} y={735} tone="blue" edge="#2a78b2" />
    <Pin x={2371} y={1769} tone="green" edge="#2f9a3a" />
    <Pin x={2371} y={1779} tone="blue" edge="#2f7fb8" />
    <Pin x={2385} y={1827} tone="blue" edge="#2a78b2" />
  </svg>
);

const PlusMinus = ({ plus }: { plus?: boolean }) => (
  <svg width="36" height="36" viewBox="0 0 36 36" stroke="#000" strokeWidth="8">
    <path d={plus ? "M0 18H36M18 0V36" : "M0 18H36"} />
  </svg>
);

/* ------------------------------ page ------------------------------ */

export default function App() {
  return (
    <Screen>
      <GlobalStyle />
      <StatusBar>
        <Clock>
          05:25
          <svg width="42" height="42" viewBox="0 0 42 42">
            <path d="M38 3.500L4 19.500H22V38.500Z" fill="#000" stroke="#000" strokeWidth="6" strokeLinejoin="round" />
          </svg>
        </Clock>
        <StatusIcons>
          <Signal>
            <SignalBar $h={16} $on />
            <SignalBar $h={23} $on />
            <SignalBar $h={32} $on={false} />
            <SignalBar $h={41} $on={false} />
          </Signal>
          <svg width="57" height="43" viewBox="0 0 57 43">
            <path d="M0 13.500A41 41 0 0 1 57 13.500L52 18.500A34 34 0 0 0 5 18.500Z" />
            <path d="M9.800 23.300A27 27 0 0 1 47.200 23.300L42 28.500A20 20 0 0 0 15 28.500Z" />
            <path d="M19.800 33.200A14 14 0 0 1 37.200 33.200L28.500 42Z" />
          </svg>
          <Battery>90</Battery>
          <BatteryTip />
        </StatusIcons>
      </StatusBar>

      <NavBar>
        <NavSide>
          <svg width="24" height="42" viewBox="0 0 24 42" fill="none" stroke={INK} strokeWidth="4.200" strokeLinecap="round" strokeLinejoin="round">
            <path d="M21 3L3 21 21 39" />
          </svg>
          <PublishButton>
            <PublishIcon w={28} color="#07540f" sw={4.2} />
            Publish
          </PublishButton>
        </NavSide>
        <NavTitle>
          <MonitorIcon w={44} color="#3f424a" sw={4.6} />
          Preview
        </NavTitle>
        <NavSide $end>
          <svg width="60" height="60" viewBox="0 0 60 60">
            <rect x="2" y="8" width="49" height="49.500" rx="10" fill="none" stroke={INK} strokeWidth="4" />
            <rect x="21" y="0" width="38" height="38" rx="9" fill={INK} />
          </svg>
          <svg width="12" height="54" viewBox="0 0 12 54" fill={INK}>
            <circle cx="6" cy="6" r="5.300" /><circle cx="6" cy="27" r="5.300" /><circle cx="6" cy="48" r="5.300" />
          </svg>
        </NavSide>
      </NavBar>

      <AddressBar>
        <HistoryIcons>
          <Arrow w={32} color={MUTED} sw={3} left />
          <Arrow w={32} color={MUTED} sw={3} />
          <svg width="46" height="42" viewBox="0 0 46 42" fill="none" stroke={INK} strokeWidth="3" strokeLinecap="round" strokeLinejoin="round">
            <path d="M38.500 27A18.500 18.500 0 1 1 31 5.200Q36 9 43.500 16.500M43.500 5V16.500H31" />
          </svg>
        </HistoryIcons>
        <UrlField>
          /
          <Arrow w={25} color={MUTED} sw={3} />
        </UrlField>
        <OpenButton>
          <svg width="31" height="31" viewBox="0 0 31 31" fill="none" stroke="#3f424a" strokeWidth="2.200" strokeLinecap="round" strokeLinejoin="round">
            <path d="M14.500 6.500H5Q1.500 6.500 1.500 10V26.500Q1.500 29.500 5 29.500H22Q25.500 29.500 25.500 26V16.500M12.500 18.500L29.500 2M20 2H29.500V11" />
          </svg>
        </OpenButton>
      </AddressBar>

      <Dialog>
        <CloseRow>
          <svg width="30" height="30" viewBox="0 0 30 30" stroke="#9b9fa3" strokeWidth="3.600" strokeLinecap="round">
            <path d="M2.500 2.500L27.500 27.500M27.500 2.500L2.500 27.500" />
          </svg>
        </CloseRow>
        <Heading>
          <CalendarIcon size={60} color="#30aae8" days />
          Select Date Range for Map View
        </Heading>
        <Description>
          Choose the date range to load and display location data on
          <br />
          the map.
        </Description>
        <MapFrame>
          <SeattleMap />
          <ZoomControl>
            <ZoomButton $first><PlusMinus plus /></ZoomButton>
            <ZoomButton><PlusMinus /></ZoomButton>
          </ZoomControl>
          <Attribution>
            <Flag />
            <MapLink>Leaflet</MapLink> | © <MapLink>OpenStreetMap</MapLink> contributors
          </Attribution>
        </MapFrame>
        <RangeRow>
          <span>Selected Range:</span>
          <DaysBadge>7 days</DaysBadge>
        </RangeRow>
        <RangeField>Sep 1, 2025 - Sep 6, 2025</RangeField>
        <Actions>
          <ActionButton>Cancel</ActionButton>
          <ActionButton $primary>
            <CalendarIcon size={48} color="#1e2431" />
            Load Data
          </ActionButton>
        </Actions>
      </Dialog>

      <BottomBar>
        <StopButton><StopGlyph /></StopButton>
        <div>
          <ToolGroup>
            <Tool $w={120} $active><MonitorIcon w={64} color="#3f424a" sw={4.6} /></Tool>
            <Tool $w={168}><DotsGridIcon /></Tool>
            <Tool $w={120}><PublishIcon w={54} color={MUTED} sw={4.4} /></Tool>
            <ToolDivider />
            <Tool $w={162}>
              <svg width="54" height="50" viewBox="0 0 54 50" fill="none" stroke={MUTED} strokeWidth="4.400" strokeLinecap="round" strokeLinejoin="round">
                <path d="M3 4L22.500 23 3 42M28 46.500H51" />
              </svg>
            </Tool>
          </ToolGroup>
          <ActiveMark />
          <HomeIndicator />
        </div>
        <Side>
          <svg width="68" height="60" viewBox="0 0 68 60" fill="none" stroke={MUTED} strokeWidth="4.400" strokeLinecap="round" strokeLinejoin="round">
            <path d="M2.500 18V42M26.500 9.500H18Q14.500 9.500 14.500 13V47Q14.500 50.500 18 50.500H26.500" />
            <rect x="38.500" y="2.300" width="27" height="55.500" rx="3.500" />
          </svg>
        </Side>
      </BottomBar>
    </Screen>
  );
}
